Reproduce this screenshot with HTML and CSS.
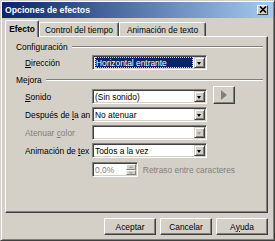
FILE: index.html
```html
<!doctype html>
<html lang="es">
    <head>
        <meta charset="UTF-8" />
        <title>Opciones de efectos</title>
        <link rel="stylesheet" href="styles.css">
    </head>
    <body>
        <div class="window">
            <div class="titlebar">
                <span class="title">Opciones de efectos</span>
                <span class="close">
                    <svg width="8" height="7" viewBox="0 0 8 7">
                        <path d="M1 0.5 L7 6.5 M7 0.5 L1 6.5" stroke="#000" stroke-width="1.6" />
                    </svg>
                </span>
            </div>

            <div class="tabs">
                <div class="tab tab-efecto active">Efecto</div>
                <div class="tab tab-control">Control del tiempo</div>
                <div class="tab tab-anim">Animación de texto</div>
            </div>

            <div class="panel">
                <div class="group-title"><span>Configuración</span><i></i></div>
                <div class="rows">
                    <label><u>D</u>irección</label>
                    <div class="combo focused">
                        <div class="value"><span>Horizontal entrante</span></div>
                        <div class="arrow"></div>
                    </div>
                </div>

                <div class="group-title"><span>Mejora</span><i></i></div>
                <div class="rows">
                    <label><u>S</u>onido</label>
                    <div class="combo">
                        <div class="value">(Sin sonido)</div>
                        <div class="arrow"></div>
                    </div>
                    <div class="play"><span></span></div>

                    <label>Después de <u>l</u>a an</label>
                    <div class="combo">
                        <div class="value">No atenuar</div>
                        <div class="arrow"></div>
                    </div>
                    <div></div>

                    <label class="disabled">Atenuar <u>c</u>olor</label>
                    <div class="combo disabled">
                        <div class="value"></div>
                        <div class="arrow"></div>
                    </div>
                    <div></div>

                    <label>Animación de <u>t</u>ex</label>
                    <div class="combo">
                        <div class="value">Todos a la vez</div>
                        <div class="arrow"></div>
                    </div>
                    <div></div>

                    <div></div>
                    <div class="spin-row">
                        <div class="spinner">
                            <div class="value">0,0%</div>
                            <div class="spin-btns">
                                <div class="spin up"></div>
                                <div class="spin down"></div>
                            </div>
                        </div>
                        <span class="disabled">Retraso entre caracteres</span>
                    </div>
                </div>
            </div>

            <div class="buttons">
                <div class="btn">Aceptar</div>
                <div class="btn">Cancelar</div>
                <div class="btn">A<u>y</u>uda</div>
            </div>
        </div>
    </body>
</html>
```

FILE: styles.css
```css
body {
    margin: 0;
    padding: 0;
    font-family: "Liberation Sans", Arial, sans-serif;
    font-size: 8.4px;
    color: #000;
    background: #d4d0c8;
}

.window {
    box-sizing: border-box;
    width: 275px;
    height: 241px;
    padding: 1px;
    background: #d4d0c8;
    border: 1px solid;
    border-color: #d4d0c8 #404040 #404040 #d4d0c8;
    box-shadow: inset 1px 1px #fff, inset -1px -1px #808080;
}

.titlebar {
    height: 16px;
    display: flex;
    align-items: center;
    padding: 0 5px 0 3px;
    background: linear-gradient(to right, #0a246a, #a6caf0);
}
.title {
    color: #fff;
    font-weight: bold;
    font-size: 8.7px;
}
.close {
    margin-left: auto;
    box-sizing: border-box;
    width: 11px;
    height: 10px;
    display: flex;
    align-items: center;
    justify-content: center;
    background: #d4d0c8;
    border: 1px solid;
    border-color: #fff #404040 #404040 #fff;
    margin-top: -1px;
}
.close svg {
    display: block;
}

.tabs {
    display: flex;
    align-items: flex-end;
    height: 16px;
    margin: 2px 0 0 3px;
    position: relative;
    z-index: 1;
}
.tab {
    box-sizing: border-box;
    height: 14px;
    display: flex;
    align-items: center;
    justify-content: center;
    border: 1px solid;
    border-bottom: none;
    border-color: #fff #404040 #404040 #fff;
    border-radius: 2px 2px 0 0;
    box-shadow: inset -1px 0 #808080;
    background: #d4d0c8;
}
.tab.active {
    height: 17px;
    margin-bottom: -1px;
    font-weight: bold;
}
.tab-efecto {
    width: 34px;
}
.tab-control {
    width: 80px;
}
.tab-anim {
    width: 87px;
}

.panel {
    box-sizing: border-box;
    height: 177px;
    margin: 0 5px 0 3px;
    padding: 0 4px 0 10px;
    border: 1px solid;
    border-color: #fff #404040 #404040 #fff;
    box-shadow: inset -1px -1px #808080;
}

.group-title {
    display: flex;
    align-items: center;
    height: 12px;
    margin-top: 4px;
}
.group-title i {
    flex: 1;
    height: 0;
    margin-left: 4px;
    border-top: 1px solid #808080;
    border-bottom: 1px solid #fff;
}

.rows {
    display: grid;
    grid-template-columns: 67px 115px 28px;
    grid-auto-rows: 15px;
    row-gap: 3px;
    align-items: center;
    margin: 2px 0 0 9px;
}
.group-title + .rows + .group-title + .rows {
    margin-top: 3px;
}
.rows label {
    white-space: nowrap;
    overflow: hidden;
}
.disabled {
    color: #808080;
}

.combo {
    box-sizing: border-box;
    height: 15px;
    display: flex;
    background: #fff;
    border: 1px solid;
    border-color: #808080 #fff #fff #808080;
    box-shadow: inset 1px 1px #404040, inset -1px -1px #d4d0c8;
    padding: 1px;
}
.combo .value {
    flex: 1;
    display: flex;
    align-items: center;
    padding-left: 1px;
    white-space: nowrap;
    overflow: hidden;
}
.combo.focused .value span {
    flex: 1;
    align-self: stretch;
    display: flex;
    align-items: center;
    padding-left: 1px;
    margin-right: 1px;
    background: #0a246a;
    color: #fff;
    outline: 1px dotted #d4d0c8;
    outline-offset: -1px;
}
.combo .arrow {
    box-sizing: border-box;
    width: 11px;
    position: relative;
    background: #d4d0c8;
    border: 1px solid;
    border-color: #d4d0c8 #404040 #404040 #d4d0c8;
    box-shadow: inset 1px 1px #fff, inset -1px -1px #808080;
}
.combo .arrow::after {
    content: "";
    position: absolute;
    left: 2px;
    top: 4px;
    border: 2.5px solid transparent;
    border-top: 3px solid #000;
    border-bottom: none;
}
.combo.disabled .arrow::after {
    border-top-color: #a0a0a0;
}

.play {
    box-sizing: border-box;
    justify-self: end;
    width: 22px;
    height: 18px;
    margin-top: -3px;
    display: flex;
    align-items: center;
    justify-content: center;
    background: #d4d0c8;
    border: 1px solid;
    border-color: #fff #404040 #404040 #fff;
    box-shadow: inset -1px -1px #808080;
}
.play span {
    border: 5px solid transparent;
    border-left: 6px solid #808080;
    border-right: none;
}

.spin-row {
    grid-column: 2 / 4;
    display: flex;
    align-items: center;
    margin-top: 2px;
    white-space: nowrap;
}
.spinner {
    box-sizing: border-box;
    width: 60px;
    height: 15px;
    display: flex;
    background: #fff;
    border: 1px solid;
    border-color: #808080 #fff #fff #808080;
    box-shadow: inset 1px 1px #404040, inset -1px -1px #d4d0c8;
    padding: 1px;
    margin-right: 5px;
}
.spinner .value {
    flex: 1;
    display: flex;
    align-items: center;
    padding-left: 1px;
    color: #808080;
}
.spin-btns {
    width: 10px;
    display: flex;
    flex-direction: column;
}
.spin {
    flex: 1;
    box-sizing: border-box;
    position: relative;
    background: #d4d0c8;
    border: 1px solid;
    border-color: #fff #808080 #808080 #fff;
}
.spin::after {
    content: "";
    position: absolute;
    left: 2px;
    top: 1px;
    border: 2px solid transparent;
}
.spin.up::after {
    border-bottom: 2px solid #a0a0a0;
    border-top: none;
}
.spin.down::after {
    border-top: 2px solid #a0a0a0;
    border-bottom: none;
}

.buttons {
    display: flex;
    justify-content: flex-end;
    gap: 4px;
    margin: 5px 5px 0 0;
}
.btn {
    box-sizing: border-box;
    width: 52px;
    height: 17px;
    display: flex;
    align-items: center;
    justify-content: center;
    border: 1px solid;
    border-color: #fff #404040 #404040 #fff;
    box-shadow: inset -1px -1px #808080;
}
```
